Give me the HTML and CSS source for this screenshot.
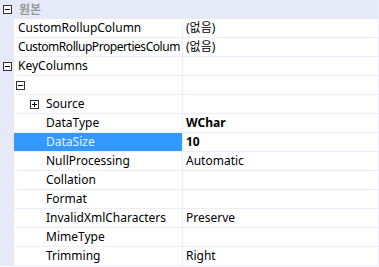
FILE: index.html
```html
<!DOCTYPE html>
<html lang="ko">
<head>
    <meta charset="UTF-8">
    <title>Properties</title>
    <link rel="stylesheet" href="styles.css">
</head>
<body>
    <div class="grid">
        <!-- 원본 category -->
        <div class="row category">
            <div class="gutter"><svg class="box" viewBox="0 0 9 9"><rect x="0.5" y="0.5" width="8" height="8" fill="#fff" stroke="#333"/><path d="M2 4.5h5" stroke="#000"/></svg></div>
            <div class="name">원본</div>
        </div>
        <div class="row">
            <div class="gutter"></div>
            <div class="name">CustomRollupColumn</div>
            <div class="value">(없음)</div>
        </div>
        <div class="row">
            <div class="gutter"></div>
            <div class="name tight">CustomRollupPropertiesColum</div>
            <div class="value">(없음)</div>
        </div>

        <!-- KeyColumns category -->
        <div class="row">
            <div class="gutter"><svg class="box" viewBox="0 0 9 9"><rect x="0.5" y="0.5" width="8" height="8" fill="#fff" stroke="#333"/><path d="M2 4.5h5" stroke="#000"/></svg></div>
            <div class="name">KeyColumns</div>
            <div class="value"></div>
        </div>
        <div class="row">
            <div class="gutter"></div>
            <div class="name lvl1"><svg class="box" viewBox="0 0 9 9"><rect x="0.5" y="0.5" width="8" height="8" fill="#fff" stroke="#333"/><path d="M2 4.5h5" stroke="#000"/></svg></div>
            <div class="value"></div>
        </div>
        <div class="row">
            <div class="gutter"></div>
            <div class="name lvl2"><svg class="box" viewBox="0 0 9 9"><rect x="0.5" y="0.5" width="8" height="8" fill="#fff" stroke="#333"/><path d="M2 4.5h5M4.5 2v5" stroke="#000"/></svg><span>Source</span></div>
            <div class="value"></div>
        </div>
        <div class="row">
            <div class="gutter"></div>
            <div class="name lvl3">DataType</div>
            <div class="value bold">WChar</div>
        </div>
        <div class="row selected">
            <div class="gutter"></div>
            <div class="name lvl3">DataSize</div>
            <div class="value bold">10</div>
        </div>
        <div class="row">
            <div class="gutter"></div>
            <div class="name lvl3">NullProcessing</div>
            <div class="value">Automatic</div>
        </div>
        <div class="row">
            <div class="gutter"></div>
            <div class="name lvl3">Collation</div>
            <div class="value"></div>
        </div>
        <div class="row">
            <div class="gutter"></div>
            <div class="name lvl3">Format</div>
            <div class="value"></div>
        </div>
        <div class="row">
            <div class="gutter"></div>
            <div class="name lvl3">InvalidXmlCharacters</div>
            <div class="value">Preserve</div>
        </div>
        <div class="row">
            <div class="gutter"></div>
            <div class="name lvl3">MimeType</div>
            <div class="value"></div>
        </div>
        <div class="row">
            <div class="gutter"></div>
            <div class="name lvl3">Trimming</div>
            <div class="value">Right</div>
        </div>
    </div>
</body>
</html>
```

FILE: styles.css
```css
html, body {
    margin: 0;
    padding: 0;
    background: #fff;
    font-family: "Noto Sans", "Noto Sans CJK KR", sans-serif;
    font-size: 12px;
    color: #000;
}
.grid {
    width: 378px;
    border-right: 1px solid #eef0fa;
}
.row {
    display: grid;
    grid-template-columns: 14px 169px 1fr;
    height: 19px;
}
.gutter {
    background: #e6eaf8;
    display: flex;
    align-items: center;
    justify-content: center;
    padding-left: 1px;
}
.name, .value {
    display: flex;
    align-items: center;
    white-space: nowrap;
    overflow: hidden;
    border-bottom: 1px solid #ebedfa;
    line-height: 18px;
}
.name {
    padding-left: 4px;
    border-right: 1px solid #ebedfa;
}
.tight {
    letter-spacing: -0.45px;
}
.value {
    padding-left: 3px;
}
.bold {
    font-weight: bold;
}
.box {
    width: 9px;
    height: 9px;
    flex: none;
    display: block;
}
.category {
    background: #e6eaf8;
    grid-template-columns: 14px 1fr;
}
.category .name {
    color: #999;
    font-weight: bold;
    border: none;
    padding-left: 5px;
}
.lvl1 {
    padding-left: 2px;
}
.lvl2 {
    padding-left: 16px;
    gap: 7px;
}
.lvl3 {
    padding-left: 32px;
}
.selected .name {
    background: #3399ff;
    color: #e8f0ff;
}
```
